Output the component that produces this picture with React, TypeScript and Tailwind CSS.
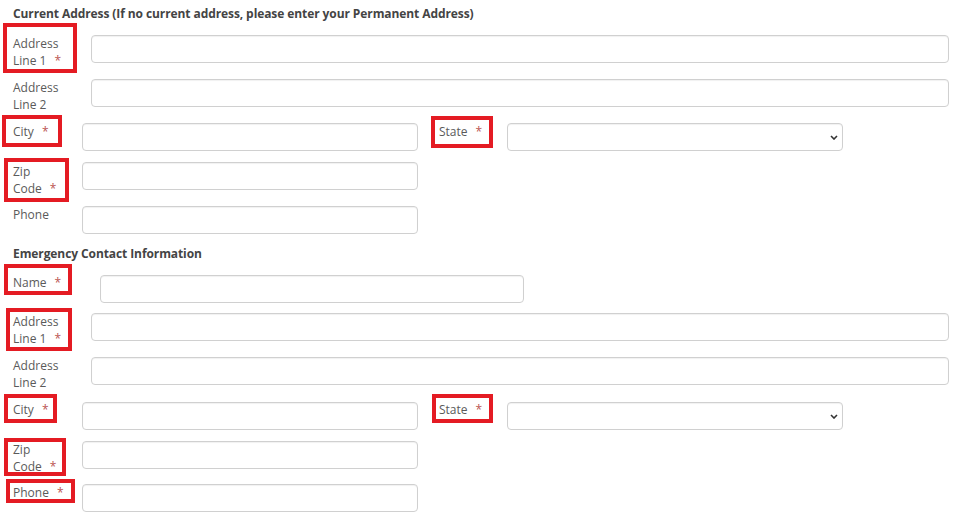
import React from "react";

const box = "border-4 border-[#e41b23]";
const field =
	"h-[28px] shrink-0 rounded-[4px] border border-[#d0d0d0] bg-white shadow-[inset_0_1px_1px_rgba(0,0,0,0.06)] outline-none";

function Star() {
	return <span className="ml-2 text-[#bb5552]">*</span>;
}

function StateSelect() {
	return (
		<div className="relative mt-[10px] w-[336px] shrink-0">
			<select className={`${field} w-[336px] appearance-none`} defaultValue="">
				<option value=""></option>
			</select>
			<svg
				className="pointer-events-none absolute right-[5px] top-[12px]"
				width="8"
				height="5"
				viewBox="0 0 8 5"
			>
				<path d="M1 1l3 3 3-3" fill="none" stroke="#333" strokeWidth="1.6" />
			</svg>
		</div>
	);
}

export default function App() {
	return (
		<div className="min-h-screen bg-white font-['Open_Sans',sans-serif] text-[12px] leading-[17px] text-[#5a5a5a]">
			{/* Current address */}
			<div className="h-[22px] pt-[5px] pl-[13px] font-bold tracking-[-0.09px] text-[#444]">
				Current Address (If no current address, please enter your Permanent Address)
			</div>

			<div className="flex h-[51px] items-start">
				<div className="w-[91px] shrink-0 pt-[1px] pl-[3px]">
					<div className={`${box} h-[50px] w-[74px] pl-[6px] pt-[8px]`}>
						Address
						<br />
						Line 1<Star />
					</div>
				</div>
				<input className={`${field} mt-[13px] w-[858px]`} />
			</div>

			<div className="flex h-[40px] items-start">
				<div className="w-[91px] shrink-0 pl-[13px] pt-[6px]">
					Address
					<br />
					Line 2
				</div>
				<input className={`${field} mt-[6px] w-[858px]`} />
			</div>

			<div className="flex h-[40px] items-start">
				<div className="w-[82px] shrink-0 pt-[2px] pl-[2px]">
					<div className={`${box} h-[32px] w-[60px] pl-[7px] pt-[4px]`}>
						City<Star />
					</div>
				</div>
				<input className={`${field} mt-[10px] w-[336px]`} />
				<div className="w-[89px] shrink-0 pt-[3px] pl-[13px]">
					<div className={`${box} h-[32px] w-[62px] pl-[4px] pt-[3px]`}>
						State<Star />
					</div>
				</div>
				<StateSelect />
			</div>

			<div className="flex h-[50px] items-start">
				<div className="w-[82px] shrink-0 pt-[5px] pl-[4px]">
					<div className={`${box} h-[44px] w-[65px] pl-[5px] pt-[1px]`}>
						Zip
						<br />
						Code<Star />
					</div>
				</div>
				<input className={`${field} mt-[9px] w-[336px]`} />
			</div>

			<div className="flex h-[33px] items-start">
				<div className="w-[82px] shrink-0 pl-[13px] pt-[3px]">Phone</div>
				<input className={`${field} mt-[3px] w-[336px]`} />
			</div>

			{/* Emergency contact */}
			<div className="h-[26px] pt-[9px] pl-[13px] font-bold tracking-[-0.09px] text-[#444]">
				Emergency Contact Information
			</div>

			<div className="flex h-[42px] items-start">
				<div className="w-[100px] shrink-0 pt-[2px] pl-[4px]">
					<div className={`${box} h-[31px] w-[68px] pl-[5px] pt-[6px]`}>
						Name<Star />
					</div>
				</div>
				<input className={`${field} mt-[13px] w-[424px]`} />
			</div>

			<div className="flex h-[49px] items-start">
				<div className="w-[91px] shrink-0 pt-[4px] pl-[6px]">
					<div className={`${box} h-[43px] w-[66px] pl-[3px] pt-[1px]`}>
						Address
						<br />
						Line 1<Star />
					</div>
				</div>
				<input className={`${field} mt-[9px] w-[858px]`} />
			</div>

			<div className="flex h-[39px] items-start">
				<div className="w-[91px] shrink-0 pl-[13px] pt-[4px]">
					Address
					<br />
					Line 2
				</div>
				<input className={`${field} mt-[4px] w-[858px]`} />
			</div>

			<div className="flex h-[40px] items-start">
				<div className="w-[82px] shrink-0 pt-[2px] pl-[4px]">
					<div className={`${box} h-[29px] w-[53px] pl-[5px] pt-[3px]`}>
						City<Star />
					</div>
				</div>
				<input className={`${field} mt-[10px] w-[336px]`} />
				<div className="w-[89px] shrink-0 pt-[2px] pl-[14px]">
					<div className={`${box} h-[29px] w-[61px] pl-[3px] pt-[3px]`}>
						State<Star />
					</div>
				</div>
				<StateSelect />
			</div>

			<div className="flex h-[45px] items-start">
				<div className="w-[82px] shrink-0 pt-[6px] pl-[4px]">
					<div className={`${box} h-[38px] w-[62px] pl-[5px]`}>
						<div className="-mt-[1px]">
							Zip
							<br />
							Code<Star />
						</div>
					</div>
				</div>
				<input className={`${field} mt-[9px] w-[336px]`} />
			</div>

			<div className="flex h-[42px] items-start">
				<div className="w-[82px] shrink-0 pt-[2px] pl-[6px]">
					<div className={`${box} h-[24px] w-[69px] pl-[3px] pt-[1px]`}>
						Phone<Star />
					</div>
				</div>
				<input className={`${field} mt-[7px] w-[336px]`} />
			</div>
		</div>
	);
}
